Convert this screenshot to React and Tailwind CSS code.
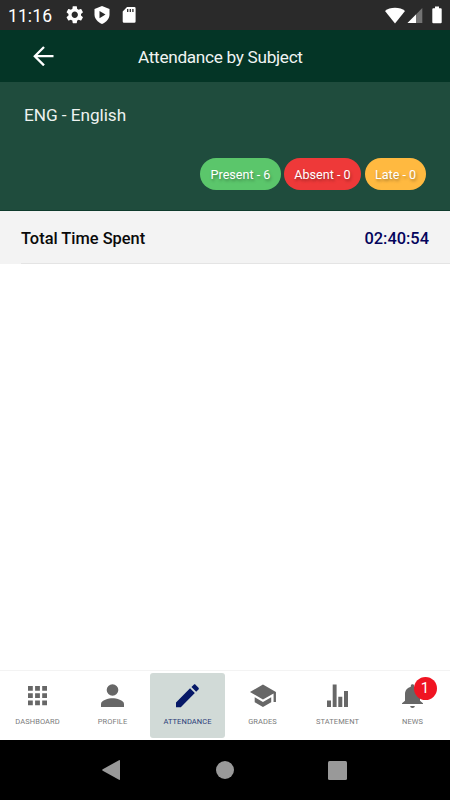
import React from "react";

function StatusBar() {
  return (
    <div className="flex h-[30px] shrink-0 items-center bg-[#2a2a2a] text-white">
      <span className="ml-[8px] w-[58px] pt-[2px] text-[17.5px] leading-[30px] tracking-[0.1px]">11:16</span>
      <svg className="h-[17.5px] w-[17.5px]" viewBox="2 2 20 20" fill="currentColor">
        <path d="M19.14 12.94c.04-.3.06-.61.06-.94s-.02-.64-.07-.94l2.03-1.58c.18-.14.23-.41.12-.61l-1.92-3.32c-.12-.22-.37-.29-.59-.22l-2.39.96c-.5-.38-1.03-.7-1.62-.94l-.36-2.54c-.04-.24-.24-.41-.48-.41h-3.84c-.24 0-.43.17-.47.41l-.36 2.54c-.59.24-1.13.57-1.62.94l-2.39-.96c-.22-.08-.47 0-.59.22L2.74 8.87c-.12.21-.08.47.12.61l2.03 1.58c-.05.3-.09.63-.09.94s.02.64.07.94l-2.03 1.58c-.18.14-.23.41-.12.61l1.92 3.32c.12.22.37.29.59.22l2.39-.96c.5.38 1.03.7 1.62.94l.36 2.54c.05.24.24.41.48.41h3.84c.24 0 .44-.17.47-.41l.36-2.54c.59-.24 1.13-.56 1.62-.94l2.39.96c.22.08.47 0 .59-.22l1.92-3.32c.12-.22.07-.47-.12-.61l-2.01-1.58zM12 15.6c-1.98 0-3.6-1.62-3.6-3.6s1.62-3.6 3.6-3.6 3.6 1.62 3.6 3.6-1.62 3.6-3.6 3.6z" />
      </svg>
      <svg className="ml-[10.5px] h-[18px] w-[16px]" viewBox="0 0 16 18">
        <path d="M8 0 15.5 3v5.5c0 4-3 7.8-7.5 9.5C3.500 16.300.5 12.500.5 8.500V3Z" fill="currentColor" />
        <path d="M5.500 5v7.200l6-3.600Z" fill="#2a2a2a" />
      </svg>
      <svg className="ml-[12px] h-[16px] w-[14px]" viewBox="0 0 14 16">
        <path d="M5 0h7.300a1.300 1.300 0 0 1 1.300 1.300v13.200a1.300 1.300 0 0 1-1.300 1.300H2a1.300 1.300 0 0 1-1.300-1.300V4.500Z" fill="currentColor" />
        <path d="M5.700 2v3M8.300 2v3M10.900 2v3" stroke="#2a2a2a" strokeWidth="1.300" />
      </svg>
      <svg className="ml-auto h-[17px] w-[20px]" viewBox="0 0 20 17">
        <path d="M0 4C2.500 1.800 6 .7 10 .7S17.500 1.800 20 4L10 16.500Z" fill="currentColor" />
      </svg>
      <svg className="ml-[2px] h-[17px] w-[16px]" viewBox="0 0 16 17">
        <path d="M.5 16 15.300 1v15Z" fill="#737373" />
        <path d="M.5 16 9 7.400V16Z" fill="currentColor" />
      </svg>
      <svg className="ml-[9px] mr-[8px] h-[18px] w-[10px]" viewBox="0 0 10 18">
        <path d="M3 .5h4v1.700h1.700a1 1 0 0 1 1 1v13a1 1 0 0 1-1 1H1.300a1 1 0 0 1-1-1v-13a1 1 0 0 1 1-1H3Z" fill="currentColor" />
      </svg>
    </div>
  );
}

function Header() {
  return (
    <header className="flex h-[52px] shrink-0 items-center bg-[#043526] text-[#f0f4f2]">
      <svg className="ml-[33px] h-[20px] w-[21px]" viewBox="0 0 21 20" fill="none" stroke="#fff" strokeWidth="2.300">
        <path d="M20.500 10.200H2M11 1 1.800 10.200 11 19.400" />
      </svg>
      <h1 className="ml-[84px] pt-[2px] text-[17.200px] leading-[50px] tracking-[-0.300px]">Attendance by Subject</h1>
    </header>
  );
}

const pill =
  "flex h-[32px] items-center justify-center rounded-full pt-[2px] text-[12.600px] text-white [text-shadow:1px_2px_3px_rgba(0,0,0,0.35)]";

function Subject() {
  return (
    <section className="flex h-[129px] shrink-0 flex-col border-b border-[#0e3a2c] bg-[#1f4c3d]">
      <h2 className="ml-[24px] mt-[21px] text-[17.200px] leading-[24px] tracking-[-0.040px] text-[#eef2f0]">ENG - English</h2>
      <div className="mr-[24px] mt-[31.300px] flex justify-end">
        <span className={pill + " w-[81px] bg-[#5bc66b]"}>Present - 6</span>
        <span className={pill + " ml-[3px] w-[77px] bg-[#ee3939]"}>Absent - 0</span>
        <span className={pill + " ml-[4px] w-[61px] bg-[#ffb940]"}>Late - 0</span>
      </div>
    </section>
  );
}

const icons = {
  dashboard: <path d="M6 6h4.800v4.800H6zM13.100 6h4.800v4.800h-4.800zM20.200 6H25v4.800h-4.800zM6 13.200h4.800V18H6zM13.100 13.200h4.800V18h-4.800zM20.200 13.200H25V18h-4.800zM6 20.400h4.800v4.800H6zM13.100 20.400h4.800v4.800h-4.800zM20.200 20.400H25v4.800h-4.800z" />,
  profile: (
    <>
      <circle cx="15.500" cy="10" r="5.800" />
      <path d="M4 27v-3c0-3.900 7.700-5.700 11.500-5.700S27 20.100 27 24v3Z" />
    </>
  ),
  attendance: (
    <path
      transform="translate(.2 .5) scale(1.270)"
      d="M3 17.250V21h3.750L17.810 9.940l-3.750-3.750L3 17.250zM20.710 7.040c.39-.39.39-1.020 0-1.410l-2.340-2.340c-.39-.39-1.020-.39-1.410 0l-1.830 1.830 3.750 3.750 1.830-1.830z"
    />
  ),
  grades: (
    <path
      transform="translate(1.800 .8) scale(1.180 1.250)"
      d="M5 13.180v4L12 21l7-3.820v-4L12 17l-7-3.820zM12 3L1 9l11 6 9-4.910V17h2V9L12 3z"
    />
  ),
  statement: <path d="M5 20.500h4V27H5zM10.700 4.500h3.900V27h-3.900zM16.300 16.700h4V27h-4zM22 11h4v16h-4z" />,
  news: (
    <path d="M15.500 28c1.300 0 2.300-.9 2.300-2h-4.600c0 1.100 1 2 2.300 2ZM23 20.800v-6.600c0-4-2.500-6.600-5.800-7.500v-.8c0-1-.7-1.700-1.700-1.700s-1.700.7-1.700 1.700v.8C10.500 7.600 8 10.200 8 14.200v6.600l-3 2.500V24h21v-.7Z" />
  ),
};

const tabs = [
  { id: "dashboard", label: "DASHBOARD" },
  { id: "profile", label: "PROFILE" },
  { id: "attendance", label: "ATTENDANCE", active: true },
  { id: "grades", label: "GRADES" },
  { id: "statement", label: "STATEMENT" },
  { id: "news", label: "NEWS", badge: 1 },
];

function TabBar() {
  return (
    <nav className="grid h-[70px] shrink-0 grid-cols-6 border-t border-[#f3f3f3] bg-white pb-[2px] pt-[2px]">
      {tabs.map((tab) => (
        <div
          key={tab.id}
          className={
            "relative flex flex-col items-center rounded-[3px] pt-[7px] " +
            (tab.active ? "bg-[#d1dad7] text-[#061867]" : "text-[#676767]")
          }
        >
          <svg className="h-[31px] w-[31px]" viewBox="0 0 31 31" fill="currentColor">
            {icons[tab.id]}
          </svg>
          <span className={"mt-[6px] text-[7.500px] leading-[10px] tracking-[0.080px] " + (tab.active ? "text-[#2b3a78]" : "text-[#7b7b7b]")}>
            {tab.label}
          </span>
          {tab.badge && (
            <span className="absolute left-[38.500px] top-[3.500px] flex h-[23px] w-[23px] items-center justify-center rounded-full bg-[#f01422] text-[15px] leading-none text-white">
              {tab.badge}
            </span>
          )}
        </div>
      ))}
    </nav>
  );
}

function SystemNav() {
  return (
    <div className="flex h-[60px] shrink-0 items-center bg-black">
      <svg className="ml-[102px] h-[20px] w-[18px]" viewBox="0 0 18 20" fill="#999">
        <path d="M.3 10.500v-1L17 .2q1-.4 1 .6v18.400q0 1-1 .6Z" />
      </svg>
      <span className="ml-[96px] h-[18px] w-[18px] rounded-full bg-[#999]" />
      <span className="ml-[94px] h-[19px] w-[19px] rounded-[1.500px] bg-[#999]" />
    </div>
  );
}

export default function App() {
  return (
    <div className="flex h-[800px] w-[450px] flex-col overflow-hidden bg-white font-[Roboto,sans-serif]">
      <StatusBar />
      <Header />
      <Subject />
      <main className="flex-1">
        <div className="flex h-[53px] bg-[#f3f3f3] pl-[21px]">
          <div className="flex flex-1 items-center justify-between border-b border-[#e4e4e4] pr-[21px] pt-[4px] text-[16.400px] font-medium">
            <span className="text-[#0a0a0a]">Total Time Spent</span>
            <span className="text-[#04045c]">02:40:54</span>
          </div>
        </div>
      </main>
      <TabBar />
      <SystemNav />
    </div>
  );
}
